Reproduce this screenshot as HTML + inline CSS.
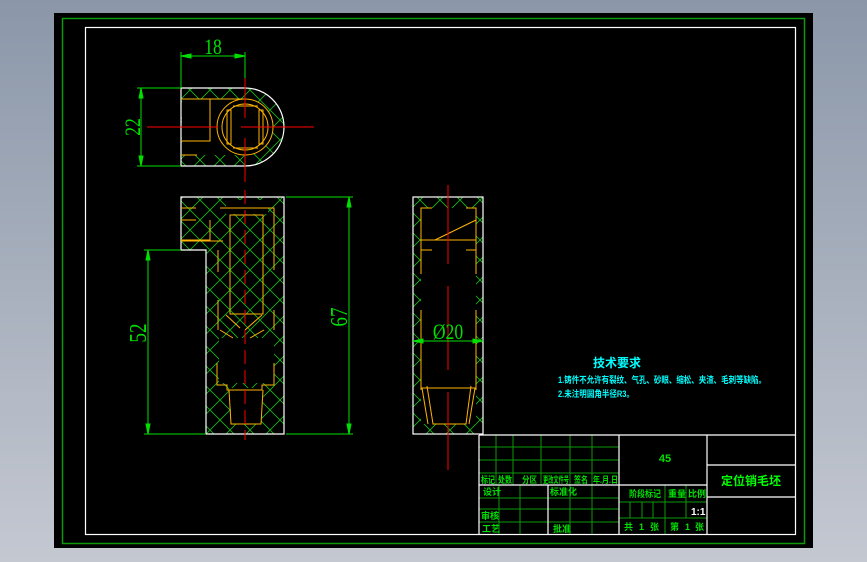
<!DOCTYPE html>
<html><head><meta charset="utf-8"><style>
html,body{margin:0;padding:0;width:867px;height:562px;overflow:hidden;background:linear-gradient(#8b97a9,#c4c8d1);}
svg{position:absolute;left:0;top:0}
text{font-family:"Liberation Sans","Noto Sans CJK SC",sans-serif}
.d{font-family:"Liberation Sans Narrow","Liberation Serif",serif}
</style></head><body>
<svg width="867" height="562" viewBox="0 0 867 562">
<defs>
<pattern id="h" width="20" height="20" patternUnits="userSpaceOnUse">
<path d="M0 0L20 20M20 0L0 20" stroke="#17b317" stroke-width="0.9"/>
</pattern>
</defs>
<rect x="54" y="13" width="759" height="535" fill="#000"/>
<rect x="62.5" y="18.5" width="742" height="525" fill="none" stroke="#0a9a0a" stroke-width="1.5"/>
<rect x="85.5" y="27.5" width="710" height="507" fill="none" stroke="#fff" stroke-width="1.2"/>

<!-- TOP VIEW -->
<path d="M181 88H245A39 39 0 0 1 245 166H181Z" fill="url(#h)"/>
<rect x="182" y="99" width="62" height="56" fill="#000"/>
<circle cx="245" cy="127" r="28" fill="#000"/>
<path d="M181 88H245A39 39 0 0 1 245 166H181Z" fill="none" stroke="#fff" stroke-width="1.2"/>
<g stroke="#ffb400" fill="none" stroke-width="1">
<circle cx="245" cy="127" r="28"/><circle cx="245" cy="127" r="23"/>
<path d="M181 99H245M210 99V141H181M181 155H197"/>
<rect x="227" y="110" width="4" height="34"/><rect x="259" y="110" width="4" height="34"/>
<path d="M233 106H258M233 148H258"/>
</g>
<g stroke="#f00" stroke-width="1">
<path d="M147 127H218M241 127H314M245 77V118M245 138V182"/>
</g>
<g stroke="#00e000" stroke-width="1" fill="#00e000">
<path d="M181 52V88M245 52V78M181 56H245M137 88H181M137 166H181M141 88V166"/>
<path d="M181 56l10-2v4zM245 56l-10-2v4zM141 88l-2 10h4zM141 166l-2-10h4z"/>
</g>
<text x="213" y="54" fill="#00e000" font-size="22" text-anchor="middle" class="d" transform="translate(213,0) scale(0.8,1) translate(-213,0)">18</text>
<text transform="translate(140,127) rotate(-90) scale(0.8,1)" fill="#00e000" font-size="22" text-anchor="middle" class="d">22</text>

<!-- FRONT VIEW -->
<path d="M181 197H284V434H206V250H181Z" fill="url(#h)"/>
<rect x="219" y="338" width="55" height="45" fill="#000"/>
<rect x="226" y="200" width="42" height="14" fill="#000"/>
<path d="M229 388H264L261 424H232Z" fill="#000"/>
<path d="M181 197H284V434H206V250H181Z" fill="none" stroke="#fff" stroke-width="1.2"/>
<g stroke="#ffb400" fill="none" stroke-width="1">
<path d="M230 215H263V314H230ZM220 208H274V251M181 208H196M181 220H196M181 240H210V220M181 241H223M218 250V272M218 300V330M274 250V270M274 310V330M217 363V385H227V390H262V385H274V363M229 390L231 424H261L263 390"/>
<path d="M226 315L240 328M262 315L245 330M220 330L233 338M264 330L250 338"/>
</g>
<path d="M245 190V440" stroke="#f00" stroke-width="1" stroke-dasharray="14 6"/>
<g stroke="#00e000" stroke-width="1" fill="#00e000">
<path d="M286 197H353M286 434H353M349 197V434M144 250H181M144 434H206M148 250V434"/>
<path d="M349 197l-2 10h4zM349 434l-2-10h4zM148 250l-2 10h4zM148 434l-2-10h4z"/>
</g>
<text transform="translate(347,317) rotate(-90) scale(0.8,1)" fill="#00e000" font-size="24" text-anchor="middle" class="d">67</text>
<text transform="translate(146,333) rotate(-90) scale(0.8,1)" fill="#00e000" font-size="24" text-anchor="middle" class="d">52</text>

<!-- SIDE VIEW -->
<rect x="413" y="197" width="70" height="237" fill="url(#h)"/>
<rect x="421" y="208" width="55" height="216" fill="#000"/>
<rect x="413" y="197" width="70" height="237" fill="none" stroke="#fff" stroke-width="1.2"/>
<g stroke="#ffb400" fill="none" stroke-width="1">
<path d="M432 208H421V240H476V208H466M421 240V274M476 240V274M421 250H432M476 250H466M435 240L476 220M421 310V390M476 310V390M421 388H476M427 386L433 424H466L471 386M422 388L428 424M475 388L469 424"/>
</g>
<path d="M448 185V264M448 286V370M448 392V470" stroke="#f00" stroke-width="1"/>
<g stroke="#00e000" stroke-width="1" fill="#00e000">
<path d="M413 341H483M413 341l10-2v4zM483 341l-10-2v4z"/>
</g>
<text transform="translate(448,339) scale(0.8,1)" fill="#00e000" font-size="22" text-anchor="middle" class="d">Ø20</text>

<!-- TECH TEXT -->
<text x="617" y="367" fill="#00ffff" font-size="12" text-anchor="middle" font-weight="bold">技术要求</text>
<text x="558" y="383" fill="#00ffff" font-size="9" font-weight="bold" textLength="208" lengthAdjust="spacingAndGlyphs">1.铸件不允许有裂纹、气孔、砂眼、缩松、夹渣、毛刺等缺陷。</text>
<text x="558" y="397" fill="#00ffff" font-size="9" font-weight="bold" textLength="76" lengthAdjust="spacingAndGlyphs">2.未注明圆角半径R3。</text>

<!-- TITLE BLOCK -->
<g stroke="#0a9a0a" stroke-width="1" fill="none">
<path d="M479 447H619M479 460H619M479 473H619M496 435V485M513 435V485M541 435V485M570 435V485M592 435V485"/>
<path d="M479 498H619M479 509H619M479 522H619M499 485V534M520 485V534M570 485V534M592 485V534"/>
<path d="M619 502H707M619 518H707M630 502V518M642 502V518M653 502V518M665 485V534M686 485V518"/>
</g>
<g stroke="#fff" stroke-width="1.2" fill="none">
<path d="M479 435H795M479 435V534M479 485H707M548 485V534M619 435V534M707 435V534M707 465H795M707 497H795"/>
</g>
<g fill="#00e000" font-size="9" font-weight="bold">
<text x="481" y="483" textLength="14" lengthAdjust="spacingAndGlyphs">标记</text><text x="498" y="483" textLength="14" lengthAdjust="spacingAndGlyphs">处数</text><text x="522" y="483" textLength="15" lengthAdjust="spacingAndGlyphs">分区</text>
<text x="543" y="483" textLength="26" lengthAdjust="spacingAndGlyphs">更改文件号</text>
<text x="574" y="483" textLength="14" lengthAdjust="spacingAndGlyphs">签名</text><text x="593" y="483" textLength="25" lengthAdjust="spacingAndGlyphs">年.月.日</text>
<text x="483" y="495">设计</text><text x="550" y="495">标准化</text>
<text x="481" y="519">审核</text><text x="482" y="532">工艺</text><text x="553" y="532">批准</text>
<text x="629" y="497" textLength="32" lengthAdjust="spacingAndGlyphs">阶段标记</text><text x="668" y="497">重量</text><text x="688" y="497">比例</text>
<text x="624" y="530">共</text><text x="639" y="530">1</text><text x="650" y="530">张</text>
<text x="670" y="530">第</text><text x="685" y="530">1</text><text x="695" y="530">张</text>
</g>
<text x="665" y="462" fill="#00e000" font-size="11" font-weight="bold" text-anchor="middle">45</text>
<text x="691" y="515" fill="#fff" font-size="10" font-weight="bold">1:1</text>
<text x="751" y="485" fill="#00ff00" font-size="12" font-weight="bold" text-anchor="middle">定位销毛坯</text>
</svg>
</body></html>
